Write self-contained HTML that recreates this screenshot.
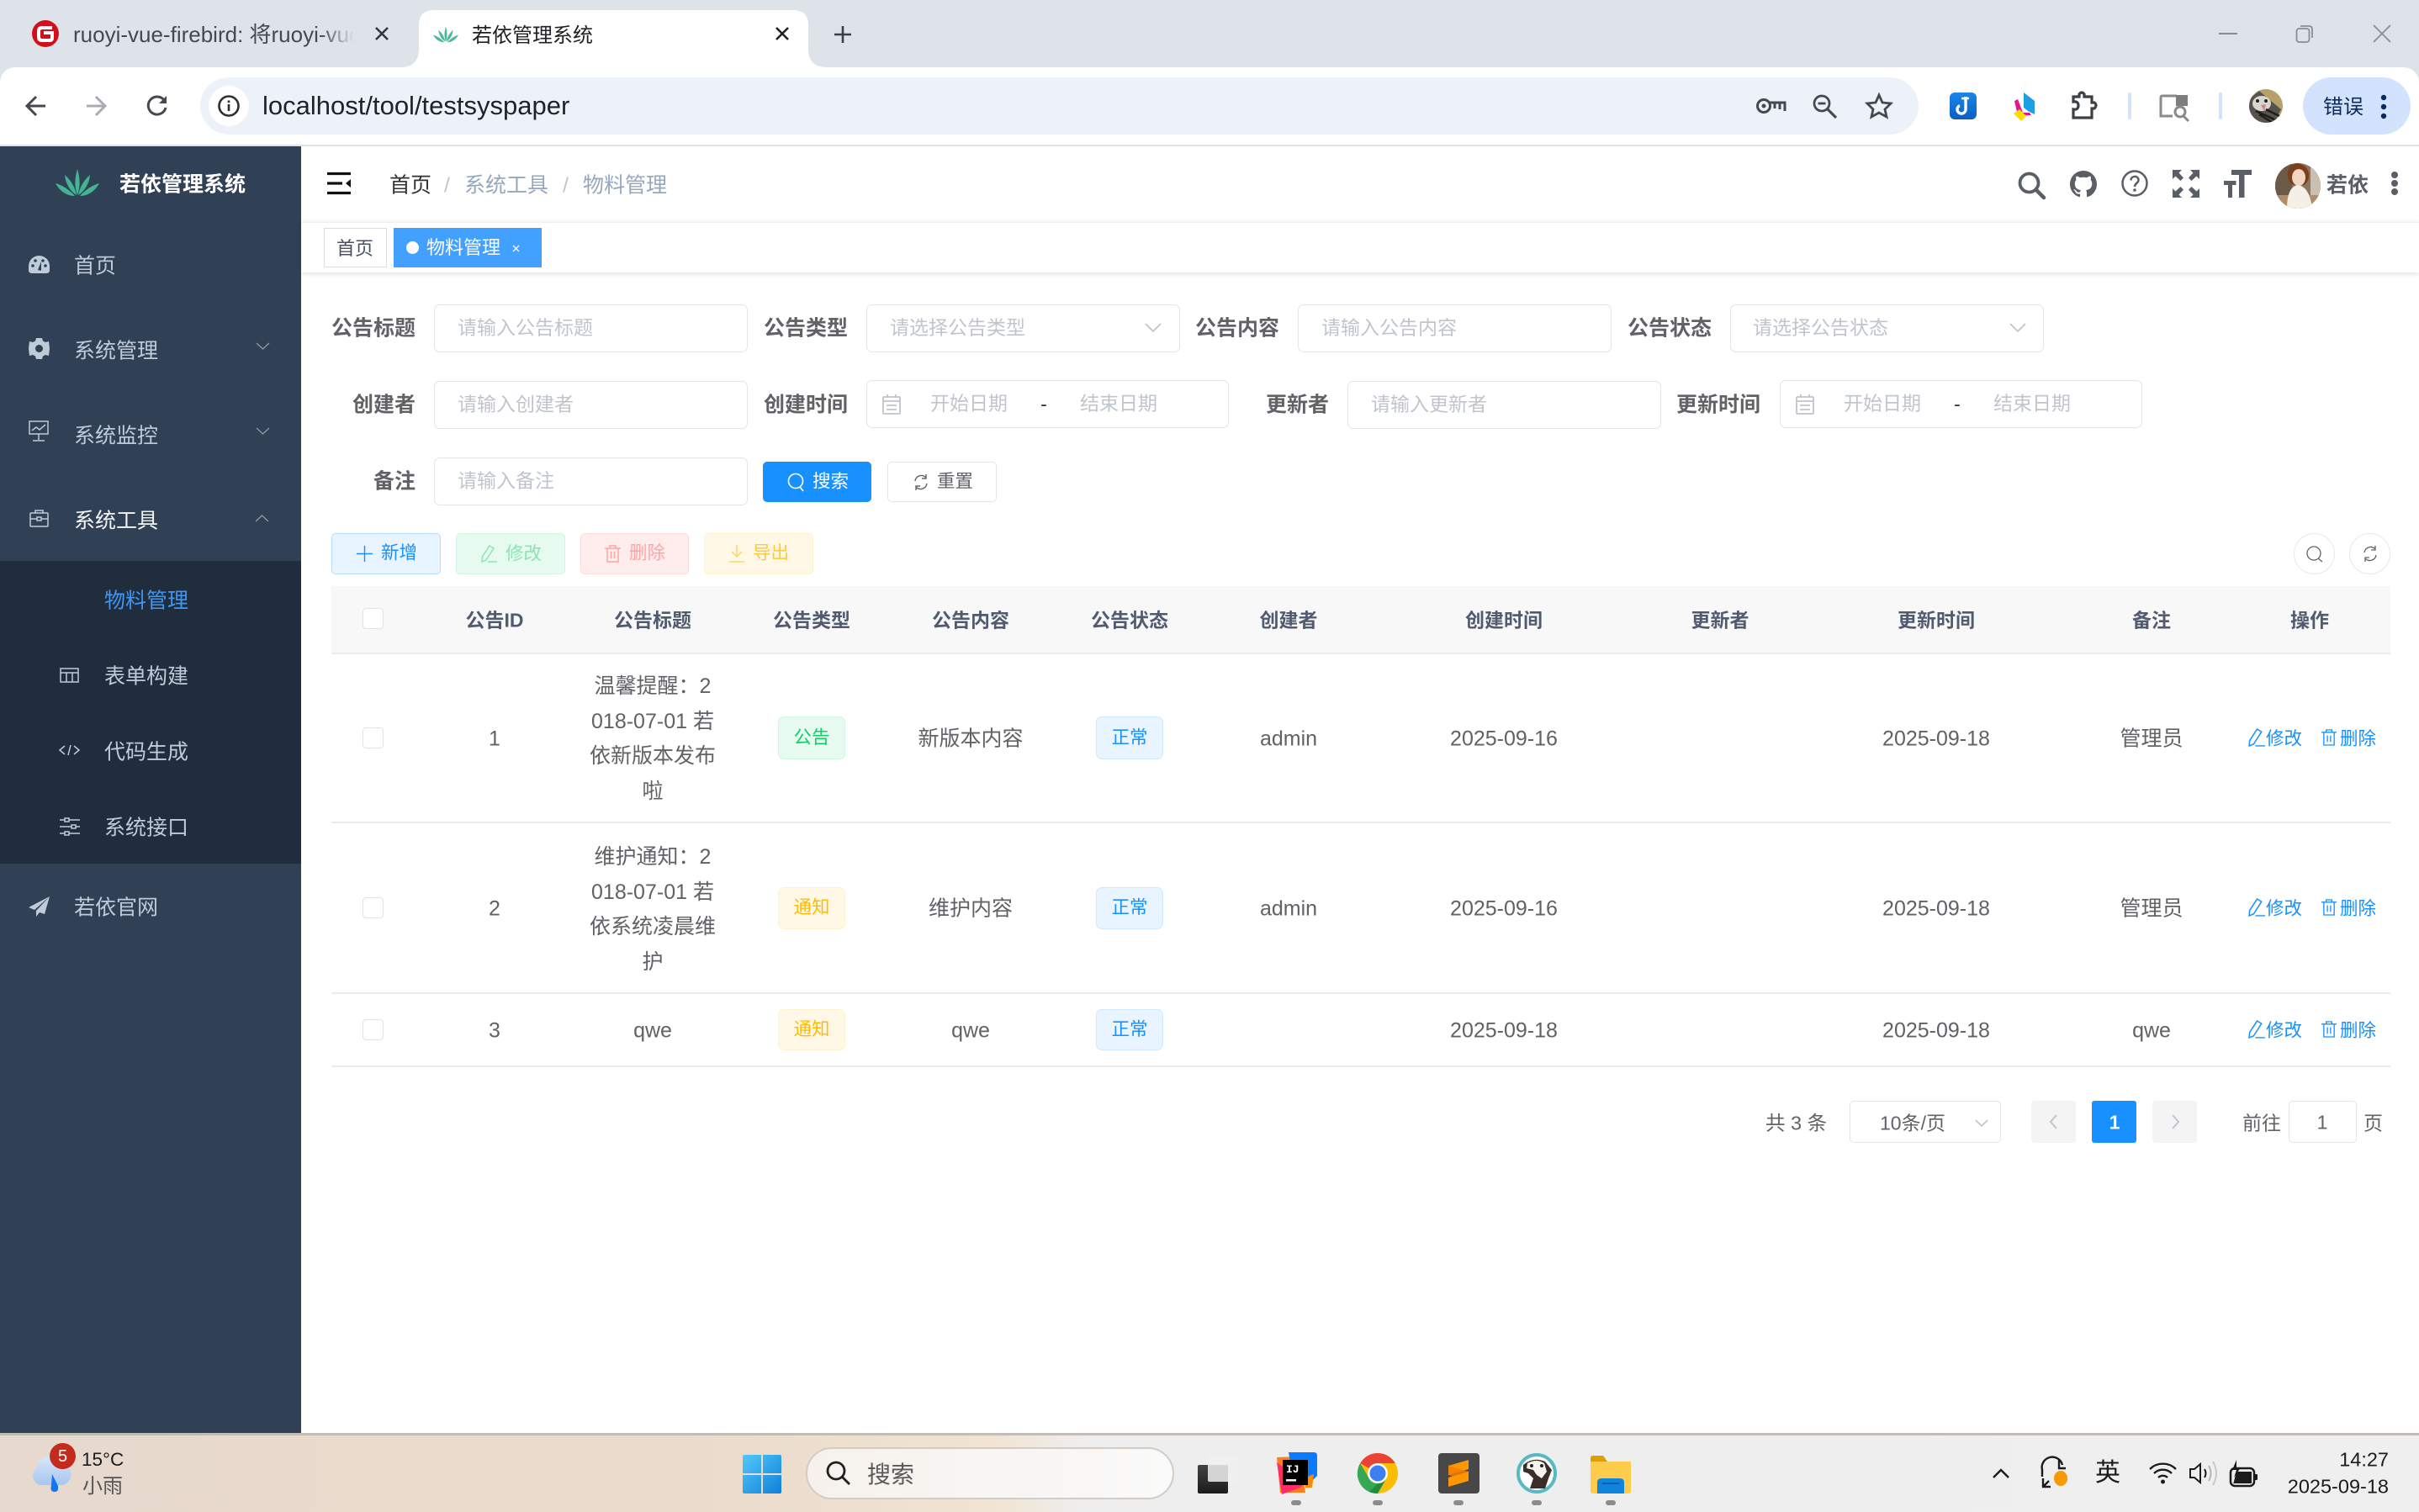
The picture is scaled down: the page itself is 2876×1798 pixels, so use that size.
<!DOCTYPE html>
<html lang="zh"><head><meta charset="utf-8"><title>若依管理系统</title>
<style>
*{box-sizing:border-box}
html,body{margin:0;padding:0;width:2876px;height:1798px;overflow:hidden;background:#fff;font-family:"Liberation Sans","Noto Sans CJK SC",sans-serif;color:#606266}
.a{position:absolute}
.t{position:absolute;white-space:nowrap;line-height:1;transform:translateY(calc(-50% + 2px))}
.c{position:absolute;white-space:nowrap;line-height:1;transform:translate(-50%,calc(-50% + 2px));text-align:center}
.r{position:absolute;white-space:nowrap;line-height:1;transform:translate(-100%,calc(-50% + 2px))}
.t.n{transform:translateY(-50%)}
.c.n{transform:translate(-50%,-50%)}
.r.n{transform:translate(-100%,-50%)}
svg{position:absolute;overflow:visible}
.m{font-size:25px;color:#bfcbd9}
.lb{font-size:25px;font-weight:700;color:#606266}
.ph{font-size:23px;color:#c0c4cc}
.ip{position:absolute;background:#fff;border:1.5px solid #e1e4ea;border-radius:7px;height:57px}
.th{font-size:23px;font-weight:700;color:#515a6e}
.td{font-size:25px;color:#606266}
.ln{position:absolute;left:394px;width:2448px;height:2px;background:#e8ecf1}
.cb{position:absolute;left:431px;width:25px;height:25px;background:#fff;border:1.5px solid #e0e3e9;border-radius:4px}
.tag{position:absolute;width:80px;border-radius:7px;border:1.5px solid;font-size:21.5px;display:flex;align-items:center;justify-content:center;line-height:1}
.g{background:#e7faf0;border-color:#d0f5e0;color:#13ce66}
.y{background:#fff8e6;border-color:#fff1cc;color:#ffba00}
.b{background:#e8f4ff;border-color:#d1e9ff;color:#1890ff}
.btn{position:absolute;top:634px;height:49px;border-radius:5px;border:1.5px solid}
.op{font-size:21.5px;color:#1890ff}
</style></head><body>

<!-- browser chrome -->
<div class="a" style="left:0;top:0;width:2876px;height:174px;background:#dee3ea"></div>
<div class="a" style="left:0;top:80px;width:2876px;height:92px;background:#fff;border-radius:18px 18px 0 0"></div>
<div class="a" style="left:0;top:172px;width:2876px;height:2px;background:#e1e2e4"></div>
<svg style="left:0;top:0" width="1000" height="100"><path d="M476 80Q498 80 498 58V30Q498 12 516 12H943Q961 12 961 30V58Q961 80 983 80Z" fill="#fff"/></svg>

<svg style="left:38px;top:24px" width="32" height="32" viewBox="0 0 32 32"><circle cx="16" cy="16" r="16" fill="#d0111b"/><path d="M24 9H12Q8 9 8 13V20Q8 24 12 24H21Q24 24 24 21V15H14" fill="none" stroke="#fff" stroke-width="4"/></svg>
<div class="t n" style="left:87px;top:41px;width:334px;overflow:hidden;font-size:26px;line-height:34px;color:#45494f;-webkit-mask-image:linear-gradient(90deg,#000 88%,transparent);mask-image:linear-gradient(90deg,#000 88%,transparent)">ruoyi-vue-firebird: 将ruoyi-vue-</div>
<svg style="left:445px;top:31px" width="18" height="18"><path d="M2 2L16 16M16 2L2 16" stroke="#33373c" stroke-width="2.6"/></svg>
<svg style="left:515px;top:28px" width="30" height="26" viewBox="0 0 52 32"><g fill="#4bb89c"><path d="M26 0C29 10 30 20 26 31C22 20 23 10 26 0Z"/><path d="M11 7C18 13 23 21 25 31C17 26 12 17 11 7Z"/><path d="M41 7C34 13 29 21 27 31C35 26 40 17 41 7Z"/><path d="M0 17C8 19 17 25 23 32C13 32 5 26 0 17Z"/><path d="M52 17C44 19 35 25 29 32C39 32 47 26 52 17Z"/></g></svg>
<div class="t" style="left:561px;top:41px;font-size:24px;color:#202124">若依管理系统</div>
<svg style="left:921px;top:31px" width="18" height="18"><path d="M2 2L16 16M16 2L2 16" stroke="#1f2124" stroke-width="2.6"/></svg>
<svg style="left:991px;top:30px" width="22" height="22"><path d="M11 1V21M1 11H21" stroke="#3b3f44" stroke-width="2.6"/></svg>
<svg style="left:2638px;top:39px" width="22" height="3"><rect width="22" height="2" fill="#8a8e94"/></svg>
<svg style="left:2729px;top:29px" width="22" height="22"><rect x="1.5" y="5" width="15" height="16" rx="3" fill="none" stroke="#8a8e94" stroke-width="1.8"/><path d="M6 2H16Q20 2 20 6V16" fill="none" stroke="#8a8e94" stroke-width="1.8"/></svg>
<svg style="left:2821px;top:30px" width="22" height="20"><path d="M1 0L21 20M21 0L1 20" stroke="#8a8e94" stroke-width="1.8"/></svg>

<svg style="left:30px;top:112px" width="26" height="28"><path d="M24 14H3M13 3L2 14L13 25" fill="none" stroke="#45494f" stroke-width="3"/></svg>
<svg style="left:101px;top:112px" width="26" height="28"><path d="M2 14H23M13 3L24 14L13 25" fill="none" stroke="#a9acb1" stroke-width="3"/></svg>
<svg style="left:174px;top:112px" width="26" height="28" viewBox="0 0 26 28"><path d="M21 7A10.5 10.5 0 1 0 23 16" fill="none" stroke="#45494f" stroke-width="3"/><path d="M24 2V11H15Z" fill="#45494f"/></svg>

<div class="a" style="left:238px;top:92px;width:2043px;height:68px;border-radius:34px;background:#edf2fa"></div>
<div class="a" style="left:248px;top:102px;width:48px;height:48px;border-radius:50%;background:#fff"></div>
<svg style="left:259px;top:113px" width="26" height="26"><circle cx="13" cy="13" r="11.5" fill="none" stroke="#2b2e33" stroke-width="2.6"/><rect x="11.7" y="11" width="2.6" height="8" fill="#2b2e33"/><rect x="11.7" y="6.5" width="2.6" height="2.6" fill="#2b2e33"/></svg>
<div class="t n" style="left:312px;top:126px;font-size:31px;color:#1f2226;line-height:38px">localhost/tool/testsyspaper</div>
<svg style="left:2088px;top:115px" width="36" height="22"><circle cx="9" cy="11" r="7.5" fill="none" stroke="#45494f" stroke-width="3"/><circle cx="9" cy="11" r="2.5" fill="#45494f"/><path d="M16 7H34V17M28 8V15M22 8V14" fill="none" stroke="#45494f" stroke-width="3"/></svg>
<svg style="left:2155px;top:112px" width="30" height="29"><circle cx="11" cy="11" r="9" fill="none" stroke="#45494f" stroke-width="2.8"/><path d="M6.5 11H15.5" stroke="#45494f" stroke-width="2.8"/><path d="M17.5 17.5L28 28" stroke="#45494f" stroke-width="3.2"/></svg>
<svg style="left:2218px;top:110px" width="32" height="31" viewBox="0 0 32 31"><path d="M16 3L20 12L30 13L23 20L25 29L16 24L7 29L9 20L2 13L12 12Z" fill="none" stroke="#45494f" stroke-width="2.8"/></svg>

<svg style="left:2318px;top:110px" width="32" height="32" viewBox="0 0 32 32"><defs><linearGradient id="jb" x1="0" y1="0" x2="0" y2="1"><stop offset="0" stop-color="#1a87e8"/><stop offset="1" stop-color="#0a5fc4"/></linearGradient></defs><rect width="32" height="32" rx="6" fill="url(#jb)"/><path d="M19 5V20A5 5 0 1 1 12 15.5" fill="none" stroke="#fff" stroke-width="3.4"/><path d="M14 7H23" stroke="#fff" stroke-width="2.5"/></svg>
<svg style="left:2391px;top:108px" width="30" height="36" viewBox="0 0 30 36"><path d="M15 2L28 12V28L20 24L15 20Z" fill="#1e9fe4"/><path d="M4 12L8 10L14 26H22L24 29H8Z" fill="#e9128f"/><path d="M3 27L10 22L18 30L12 36Z" fill="#ffdc00"/></svg>
<svg style="left:2461px;top:108px" width="34" height="34" viewBox="0 0 34 34"><path d="M4 7H11V4Q14 0 17 4V7H26V14H29Q33 17 29 21H26V32H4V22Q10 23 10 17.5Q10 12 4 13Z" fill="none" stroke="#3c4043" stroke-width="3.2"/></svg>
<div class="a" style="left:2530px;top:110px;width:4px;height:32px;background:#d3e3fd;border-radius:2px"></div>
<svg style="left:2568px;top:112px" width="36" height="32"><path d="M20 2H3Q1 2 1 4V26H15" fill="none" stroke="#8a8a8a" stroke-width="3"/><path d="M19 1H33V14H19Z" fill="#7d7d7d"/><circle cx="24" cy="21" r="6" fill="none" stroke="#8a8a8a" stroke-width="3"/><path d="M28 26L34 32" stroke="#8a8a8a" stroke-width="3"/></svg>
<div class="a" style="left:2638px;top:110px;width:4px;height:32px;background:#d3e3fd;border-radius:2px"></div>
<svg style="left:2674px;top:106px" width="40" height="40" viewBox="0 0 40 40"><defs><clipPath id="ca"><circle cx="20" cy="20" r="20"/></clipPath></defs><g clip-path="url(#ca)"><rect width="40" height="40" fill="#b8a06a"/><path d="M0 12L12 2L26 14L38 24L30 40H4L0 30Z" fill="#55534e"/><ellipse cx="15" cy="17" rx="11" ry="9" fill="#d9d6cf"/><path d="M14 19L20 18L18 26Z" fill="#d9808e"/><path d="M8 26L30 36M12 30L28 40M20 24L36 32" stroke="#1d1d1b" stroke-width="2.5"/><circle cx="10" cy="14" r="2" fill="#222"/><circle cx="20" cy="14" r="2" fill="#222"/></g></svg>
<div class="a" style="left:2738px;top:92px;width:128px;height:68px;border-radius:34px;background:#d3e3fd"></div>
<div class="t" style="left:2762px;top:126px;font-size:24px;color:#0b2a5c">错误</div>
<svg style="left:2829px;top:111px" width="10" height="32"><circle cx="5" cy="5" r="3.2" fill="#0b2a5c"/><circle cx="5" cy="16" r="3.2" fill="#0b2a5c"/><circle cx="5" cy="27" r="3.2" fill="#0b2a5c"/></svg>

<!-- sidebar -->
<div class="a" style="left:0;top:174px;width:358px;height:1530px;background:#304156"></div>
<div class="a" style="left:0;top:667px;width:358px;height:360px;background:#1f2d3d"></div>
<svg style="left:66px;top:201px" width="52" height="32" viewBox="0 0 52 32"><g fill="#45b492"><path d="M26 0C29 10 30 20 26 31C22 20 23 10 26 0Z"/><path d="M11 7C18 13 23 21 25 31C17 26 12 17 11 7Z"/><path d="M41 7C34 13 29 21 27 31C35 26 40 17 41 7Z"/><path d="M0 17C8 19 17 25 23 32C13 32 5 26 0 17Z"/><path d="M52 17C44 19 35 25 29 32C39 32 47 26 52 17Z"/></g></svg>
<div class="t" style="left:142px;top:218px;font-size:25px;font-weight:700;color:#fff">若依管理系统</div>

<div class="t m" style="left:88px;top:315px">首页</div>
<div class="t m" style="left:88px;top:416px">系统管理</div>
<div class="t m" style="left:88px;top:517px">系统监控</div>
<div class="t m" style="left:88px;top:618px;color:#f4f4f5">系统工具</div>
<div class="t m" style="left:124px;top:713px;color:#3f96f5">物料管理</div>
<div class="t m" style="left:124px;top:803px">表单构建</div>
<div class="t m" style="left:124px;top:893px">代码生成</div>
<div class="t m" style="left:124px;top:983px">系统接口</div>
<div class="t m" style="left:88px;top:1078px">若依官网</div>

<svg style="left:34px;top:304px" width="25" height="22" viewBox="0 0 25 22"><path d="M12.5 0A12.5 12.5 0 0 1 25 12.5V17Q25 21 21 21H4Q0 21 0 17V12.5A12.5 12.5 0 0 1 12.5 0Z" fill="#bfcbd9"/><circle cx="5" cy="12" r="1.8" fill="#304156"/><circle cx="8" cy="6" r="1.8" fill="#304156"/><circle cx="20" cy="12" r="1.8" fill="#304156"/><circle cx="17" cy="6" r="1.8" fill="#304156"/><path d="M11 17L15 7L15 18Z" fill="#304156"/></svg>
<svg style="left:34px;top:402px" width="25" height="25" viewBox="0 0 25 25"><path d="M9 0H16L17 3.500L20 5L24 4L25 12.500L24 21L20 20L17 21.500L16 25H9L8 21.500L5 20L1 21L0 12.500L1 4L5 5L8 3.500Z" fill="#bfcbd9"/><circle cx="12.500" cy="12.500" r="4.500" fill="#304156"/></svg>
<svg style="left:34px;top:500px" width="24" height="25" viewBox="0 0 24 25" fill="none" stroke="#bfcbd9" stroke-width="1.5"><rect x="1" y="1" width="22" height="15"/><path d="M12 16V23M5 24H19M4 12L9 8L13 11L20 5"/></svg>
<svg style="left:35px;top:605px" width="23" height="22" viewBox="0 0 23 22" fill="none" stroke="#bfcbd9" stroke-width="1.5"><rect x="1" y="5" width="21" height="16" rx="1"/><path d="M7 5V2H16V5M1 12H9M14 12H22"/><rect x="9" y="10" width="5" height="4"/></svg>
<svg style="left:71px;top:794px" width="23" height="18" viewBox="0 0 23 18" fill="none" stroke="#bfcbd9" stroke-width="1.5"><rect x="1" y="1" width="21" height="16"/><path d="M1 6H22M8 6V17M15 6V17"/></svg>
<svg style="left:70px;top:885px" width="25" height="14" viewBox="0 0 25 14" fill="none" stroke="#bfcbd9" stroke-width="1.5"><path d="M7 2L1 7L7 12M18 2L24 7L18 12M14 1L11 13"/></svg>
<svg style="left:71px;top:971px" width="24" height="24" viewBox="0 0 24 24" fill="none" stroke="#bfcbd9" stroke-width="1.5"><path d="M0 4H6M11 4H24M0 12H14M19 12H24M0 20H6M11 20H24"/><rect x="6" y="2" width="5" height="4"/><rect x="14" y="10" width="5" height="4"/><rect x="6" y="18" width="5" height="4"/></svg>
<svg style="left:34px;top:1066px" width="25" height="24" viewBox="0 0 25 24"><path d="M25 0L0 13L7 16L25 0ZM25 0L9 17V24L13 19L19 21Z" fill="#bfcbd9"/></svg>
<svg style="left:304px;top:407px" width="17" height="10"><path d="M1 1L8.5 8L16 1" fill="none" stroke="#909aa8" stroke-width="1.3"/></svg>
<svg style="left:304px;top:508px" width="17" height="10"><path d="M1 1L8.5 8L16 1" fill="none" stroke="#909aa8" stroke-width="1.3"/></svg>
<svg style="left:303px;top:611px" width="17" height="10"><path d="M1 9L8.5 2L16 9" fill="none" stroke="#909aa8" stroke-width="1.3"/></svg>

<!-- navbar -->
<div class="a" style="left:358px;top:174px;width:2518px;height:90px;background:#fff"></div>
<div class="a" style="left:358px;top:264px;width:2518px;height:60px;background:#fff;border-top:1px solid #eef0f2;box-shadow:0 2px 5px rgba(0,21,41,.12),0 -2px 5px rgba(0,21,41,.03)"></div>
<svg style="left:389px;top:205px" width="28" height="26" viewBox="0 0 28 26"><path d="M0 1.5H28M0 13H18M0 24.5H28" stroke="#111" stroke-width="3.2"/><path d="M28 8L22 13L28 18Z" fill="#111"/></svg>
<div class="t" style="left:463px;top:219px;font-size:25px;color:#303133">首页</div>
<div class="t" style="left:528px;top:219px;font-size:25px;color:#c0c4cc">/</div>
<div class="t" style="left:552px;top:219px;font-size:25px;color:#97a8be">系统工具</div>
<div class="t" style="left:669px;top:219px;font-size:25px;color:#c0c4cc">/</div>
<div class="t" style="left:693px;top:219px;font-size:25px;color:#97a8be">物料管理</div>

<svg style="left:2399px;top:204px" width="33" height="33" viewBox="0 0 33 33"><circle cx="13.5" cy="13.5" r="11" fill="none" stroke="#5a5e66" stroke-width="3.8"/><path d="M21.5 21.5L31 31" stroke="#5a5e66" stroke-width="4.5" stroke-linecap="round"/></svg>
<svg style="left:2461px;top:203px" width="32" height="32" viewBox="0 0 16 16"><path fill="#5a5e66" d="M8 0C3.580 0 0 3.580 0 8c0 3.540 2.290 6.530 5.470 7.590.4.070.55-.17.55-.38 0-.19-.01-.82-.01-1.490-2.010.37-2.530-.49-2.690-.94-.09-.23-.48-.94-.82-1.130-.28-.15-.68-.52-.01-.53.63-.01 1.080.58 1.230.82.720 1.210 1.870.87 2.330.66.070-.52.280-.87.510-1.070-1.780-.2-3.640-.89-3.640-3.950 0-.87.310-1.590.820-2.150-.08-.2-.36-1.020.08-2.120 0 0 .67-.21 2.200.82.640-.18 1.320-.27 2-.27s1.360.09 2 .27c1.530-1.040 2.200-.82 2.200-.82.440 1.100.16 1.920.08 2.120.51.560.82 1.270.82 2.150 0 3.070-1.870 3.750-3.650 3.950.29.250.54.730.54 1.480 0 1.070-.01 1.930-.01 2.200 0 .21.150.46.550.38A8.013 8.013 0 0 0 16 8c0-4.420-3.580-8-8-8z"/></svg>
<svg style="left:2522px;top:202px" width="32" height="32" viewBox="0 0 32 32"><circle cx="16" cy="16" r="14.5" fill="none" stroke="#5a5e66" stroke-width="2.5"/><path d="M11.5 12.5C11.5 6.5 20.5 6.5 20.5 12C20.500 16 16 15.500 16 20" fill="none" stroke="#5a5e66" stroke-width="2.5"/><circle cx="16" cy="24" r="1.8" fill="#5a5e66"/></svg>
<svg style="left:2583px;top:202px" width="32" height="33" viewBox="0 0 32 33" fill="#5a5e66"><path d="M0 0H11L7.500 3.500L13 9.500L9.500 13L3.500 7.500L0 11ZM32 0V11L28.500 7.500L22.500 13L19 9.500L24.500 3.500L21 0ZM0 33V22L3.500 25.500L9.500 20L13 23.500L7.500 29.500L11 33ZM32 33H21L24.500 29.500L19 23.500L22.500 20L28.500 25.500L32 22Z"/></svg>
<svg style="left:2644px;top:202px" width="33" height="33" viewBox="0 0 33 33" fill="#5a5e66"><path d="M9 0H33V6H24.500V33H18V6H9Z"/><path d="M0 13H14.500V18H10V33H5V18H0Z"/></svg>
<svg style="left:2705px;top:194px" width="54" height="54" viewBox="0 0 54 54"><defs><clipPath id="cb"><circle cx="27" cy="27" r="27"/></clipPath></defs><g clip-path="url(#cb)"><rect width="54" height="54" fill="#8c7561"/><rect x="0" y="0" width="20" height="54" fill="#6b5a48"/><rect x="42" y="0" width="12" height="54" fill="#c9c0b2"/><rect x="0" y="38" width="54" height="16" fill="#b08e6c"/><path d="M26 0Q14 2 15 14Q16 24 22 26H34Q41 22 40 12Q38 2 26 0Z" fill="#7a3f1c"/><ellipse cx="28" cy="17" rx="8" ry="10" fill="#f3d6c2"/><path d="M14 54Q14 28 27 26Q41 28 44 54Z" fill="#f4efe7"/></g></svg>
<div class="t" style="left:2766px;top:219px;font-size:25px;font-weight:700;color:#5a5e66">若依</div>
<svg style="left:2841px;top:203px" width="12" height="30"><circle cx="6" cy="5" r="4" fill="#5a5e66"/><circle cx="6" cy="15" r="4" fill="#5a5e66"/><circle cx="6" cy="25" r="4" fill="#5a5e66"/></svg>

<!-- tags -->
<div class="a" style="left:385px;top:271px;width:75px;height:47px;background:#fff;border:1.5px solid #d8dce5"></div>
<div class="c" style="left:422px;top:294px;font-size:22px;color:#495060">首页</div>
<div class="a" style="left:468px;top:271px;width:176px;height:47px;background:#42a0ff"></div>
<div class="a" style="left:483px;top:287px;width:15px;height:15px;border-radius:50%;background:#fff"></div>
<div class="t" style="left:507px;top:293px;font-size:22px;color:#fff">物料管理</div>
<svg style="left:609px;top:291px" width="9" height="9"><path d="M1 1L8 8M8 1L1 8" stroke="#e8f3ff" stroke-width="1.4"/></svg>

<!-- form row 1 -->
<div class="r lb" style="left:494px;top:389px">公告标题</div>
<div class="ip" style="left:516px;top:362px;width:373px"></div><div class="t n ph" style="left:544px;top:390px">请输入公告标题</div>
<div class="r lb" style="left:1008px;top:389px">公告类型</div>
<div class="ip" style="left:1030px;top:362px;width:373px"></div><div class="t n ph" style="left:1058px;top:390px">请选择公告类型</div>
<svg style="left:1361px;top:384px" width="20" height="12"><path d="M1 1L10 10L19 1" fill="none" stroke="#c0c4cc" stroke-width="1.8"/></svg>
<div class="r lb" style="left:1521px;top:389px">公告内容</div>
<div class="ip" style="left:1543px;top:362px;width:373px"></div><div class="t n ph" style="left:1571px;top:390px">请输入公告内容</div>
<div class="r lb" style="left:2035px;top:389px">公告状态</div>
<div class="ip" style="left:2057px;top:362px;width:373px"></div><div class="t n ph" style="left:2084px;top:390px">请选择公告状态</div>
<svg style="left:2389px;top:384px" width="20" height="12"><path d="M1 1L10 10L19 1" fill="none" stroke="#c0c4cc" stroke-width="1.8"/></svg>

<!-- form row 2 -->
<div class="r lb" style="left:494px;top:480px">创建者</div>
<div class="ip" style="left:516px;top:453px;width:373px"></div><div class="t n ph" style="left:544px;top:481px">请输入创建者</div>
<div class="r lb" style="left:1008px;top:480px">创建时间</div>
<div class="ip" style="left:1030px;top:452px;width:431px"></div>
<svg style="left:1049px;top:469px" width="22" height="24" viewBox="0 0 22 24" fill="none" stroke="#c0c4cc" stroke-width="1.8"><rect x="1" y="3" width="20" height="20" rx="1"/><path d="M1 8H21M6 0V4M16 0V4M5 13H17M5 18H17" /></svg>
<div class="t n ph" style="left:1106px;top:480px">开始日期</div>
<div class="c n" style="left:1241px;top:481px;font-size:23px;color:#303133">-</div>
<div class="t n ph" style="left:1284px;top:480px">结束日期</div>
<div class="r lb" style="left:1580px;top:480px">更新者</div>
<div class="ip" style="left:1602px;top:453px;width:373px"></div><div class="t n ph" style="left:1630px;top:481px">请输入更新者</div>
<div class="r lb" style="left:2093px;top:480px">更新时间</div>
<div class="ip" style="left:2116px;top:452px;width:431px"></div>
<svg style="left:2135px;top:469px" width="22" height="24" viewBox="0 0 22 24" fill="none" stroke="#c0c4cc" stroke-width="1.8"><rect x="1" y="3" width="20" height="20" rx="1"/><path d="M1 8H21M6 0V4M16 0V4M5 13H17M5 18H17" /></svg>
<div class="t n ph" style="left:2192px;top:480px">开始日期</div>
<div class="c n" style="left:2327px;top:481px;font-size:23px;color:#303133">-</div>
<div class="t n ph" style="left:2370px;top:480px">结束日期</div>

<!-- form row 3 -->
<div class="r lb" style="left:494px;top:571px">备注</div>
<div class="ip" style="left:516px;top:544px;width:373px"></div><div class="t n ph" style="left:544px;top:572px">请输入备注</div>
<div class="a" style="left:907px;top:549px;width:129px;height:48px;border-radius:5px;background:#1890ff"></div>
<svg style="left:936px;top:562px" width="21" height="23" viewBox="0 0 21 23" fill="none" stroke="#fff" stroke-width="1.6"><circle cx="10" cy="10" r="8.500"/><path d="M15 17L19 22"/></svg>
<div class="t n" style="left:966px;top:573px;font-size:21.5px;color:#fff">搜索</div>
<div class="a" style="left:1055px;top:549px;width:130px;height:48px;border-radius:5px;background:#fff;border:1.5px solid #e1e4ea"></div>
<svg style="left:1086px;top:564px" width="18" height="19" viewBox="0 0 18 19" fill="none" stroke="#606266" stroke-width="1.4"><path d="M2 8A7.500 7.500 0 0 1 15 4M16 11A7.500 7.500 0 0 1 3 15M15 0V5H10M3 19V14H8"/></svg>
<div class="t n" style="left:1114px;top:573px;font-size:21.5px;color:#606266">重置</div>

<!-- toolbar -->
<div class="btn" style="left:394px;width:130px;background:#e8f4ff;border-color:#b5dcff"></div>
<svg style="left:424px;top:649px" width="19" height="19"><path d="M9.500 0V19M0 9.500H19" stroke="#1890ff" stroke-width="1.4"/></svg>
<div class="t n" style="left:453px;top:658px;font-size:21.5px;color:#1890ff">新增</div>
<div class="btn" style="left:542px;width:130px;background:#e7faf0;border-color:#d0f5e0"></div>
<svg style="left:572px;top:648px" width="19" height="21" viewBox="0 0 19 21" fill="none" stroke="#89e6b3" stroke-width="1.5"><path d="M10 1L15 4L6 18L1 20L1.500 14ZM8 20H19"/></svg>
<div class="t n" style="left:601px;top:659px;font-size:21.5px;color:#89e6b3">修改</div>
<div class="btn" style="left:690px;width:129px;background:#ffeded;border-color:#ffdbdb"></div>
<svg style="left:719px;top:648px" width="19" height="21" viewBox="0 0 19 21" fill="none" stroke="#ffa4a4" stroke-width="1.5"><path d="M0 4H19M6 4V1H13V4M3 4V20H16V4M7.500 8V16M11.500 8V16"/></svg>
<div class="t n" style="left:748px;top:658px;font-size:21.5px;color:#ffa4a4">删除</div>
<div class="btn" style="left:837px;width:130px;background:#fff8e6;border-color:#fff1cc"></div>
<svg style="left:867px;top:648px" width="18" height="21" viewBox="0 0 18 21" fill="none" stroke="#ffd666" stroke-width="1.5"><path d="M9 0V14M3 8L9 14L15 8M0 20H18"/></svg>
<div class="t n" style="left:895px;top:658px;font-size:21.5px;color:#ffc93d">导出</div>

<div class="a" style="left:2727px;top:634px;width:49px;height:49px;border-radius:50%;background:#fff;border:1.5px solid #e6e8ec"></div>
<svg style="left:2742px;top:649px" width="20" height="20" viewBox="0 0 20 20" fill="none" stroke="#606266" stroke-width="1.3"><circle cx="9" cy="9" r="8"/><path d="M14 15L19 19"/></svg>
<div class="a" style="left:2793px;top:634px;width:49px;height:49px;border-radius:50%;background:#fff;border:1.5px solid #e6e8ec"></div>
<svg style="left:2809px;top:649px" width="18" height="19" viewBox="0 0 18 19" fill="none" stroke="#606266" stroke-width="1.3"><path d="M2 8A7.500 7.500 0 0 1 15 4M16 11A7.500 7.500 0 0 1 3 15M15 0V5H10M3 19V14H8"/></svg>

<!-- table -->
<div class="a" style="left:394px;top:697px;width:2448px;height:79px;background:#f8f8f9"></div>
<div class="ln" style="top:776px"></div><div class="ln" style="top:977px"></div><div class="ln" style="top:1180px"></div><div class="ln" style="top:1267px"></div>
<div class="cb" style="top:723px"></div>
<div class="c th" style="left:588px;top:736px">公告ID</div>
<div class="c th" style="left:776px;top:736px">公告标题</div>
<div class="c th" style="left:965px;top:736px">公告类型</div>
<div class="c th" style="left:1154px;top:736px">公告内容</div>
<div class="c th" style="left:1343px;top:736px">公告状态</div>
<div class="c th" style="left:1532px;top:736px">创建者</div>
<div class="c th" style="left:1788px;top:736px">创建时间</div>
<div class="c th" style="left:2045px;top:736px">更新者</div>
<div class="c th" style="left:2302px;top:736px">更新时间</div>
<div class="c th" style="left:2558px;top:736px">备注</div>
<div class="c th" style="left:2746px;top:736px">操作</div>

<!-- row 1 -->
<div class="cb" style="top:865px"></div>
<div class="c td" style="left:588px;top:877px">1</div>
<div class="c td" style="left:776px;top:877px;line-height:41.5px">温馨提醒：2<br>018-07-01 若<br>依新版本发布<br>啦</div>
<div class="tag g" style="left:925px;top:852px;height:51px">公告</div>
<div class="c td" style="left:1154px;top:877px">新版本内容</div>
<div class="tag b" style="left:1303px;top:852px;height:51px">正常</div>
<div class="c td" style="left:1532px;top:877px">admin</div>
<div class="c td" style="left:1788px;top:877px">2025-09-16</div>
<div class="c td" style="left:2302px;top:877px">2025-09-18</div>
<div class="c td" style="left:2558px;top:877px">管理员</div>
<!-- row 2 -->
<div class="cb" style="top:1067px"></div>
<div class="c td" style="left:588px;top:1079px">2</div>
<div class="c td" style="left:776px;top:1080px;line-height:41.5px">维护通知：2<br>018-07-01 若<br>依系统凌晨维<br>护</div>
<div class="tag y" style="left:925px;top:1055px;height:50px">通知</div>
<div class="c td" style="left:1154px;top:1079px">维护内容</div>
<div class="tag b" style="left:1303px;top:1055px;height:50px">正常</div>
<div class="c td" style="left:1532px;top:1079px">admin</div>
<div class="c td" style="left:1788px;top:1079px">2025-09-16</div>
<div class="c td" style="left:2302px;top:1079px">2025-09-18</div>
<div class="c td" style="left:2558px;top:1079px">管理员</div>
<!-- row 3 -->
<div class="cb" style="top:1212px"></div>
<div class="c td" style="left:588px;top:1224px">3</div>
<div class="c td" style="left:776px;top:1224px">qwe</div>
<div class="tag y" style="left:925px;top:1200px;height:49px">通知</div>
<div class="c td" style="left:1154px;top:1224px">qwe</div>
<div class="tag b" style="left:1303px;top:1200px;height:49px">正常</div>
<div class="c td" style="left:1788px;top:1224px">2025-09-18</div>
<div class="c td" style="left:2302px;top:1224px">2025-09-18</div>
<div class="c td" style="left:2558px;top:1224px">qwe</div>

<!-- ops -->
<svg style="left:2673px;top:866px" width="20" height="22" viewBox="0 0 19 21" fill="none" stroke="#1890ff" stroke-width="1.4"><path d="M10 1L15 4L6 18L1 20L1.500 14ZM8 20H19"/></svg>
<div class="t op" style="left:2694px;top:877px">修改</div>
<svg style="left:2760px;top:866px" width="18" height="22" viewBox="0 0 19 21" fill="none" stroke="#1890ff" stroke-width="1.4"><path d="M0 4H19M6 4V1H13V4M3 4V20H16V4M7.500 8V16M11.500 8V16"/></svg>
<div class="t op" style="left:2782px;top:877px">删除</div>
<svg style="left:2673px;top:1068px" width="20" height="22" viewBox="0 0 19 21" fill="none" stroke="#1890ff" stroke-width="1.4"><path d="M10 1L15 4L6 18L1 20L1.500 14ZM8 20H19"/></svg>
<div class="t op" style="left:2694px;top:1079px">修改</div>
<svg style="left:2760px;top:1068px" width="18" height="22" viewBox="0 0 19 21" fill="none" stroke="#1890ff" stroke-width="1.4"><path d="M0 4H19M6 4V1H13V4M3 4V20H16V4M7.500 8V16M11.500 8V16"/></svg>
<div class="t op" style="left:2782px;top:1079px">删除</div>
<svg style="left:2673px;top:1213px" width="20" height="22" viewBox="0 0 19 21" fill="none" stroke="#1890ff" stroke-width="1.4"><path d="M10 1L15 4L6 18L1 20L1.500 14ZM8 20H19"/></svg>
<div class="t op" style="left:2694px;top:1224px">修改</div>
<svg style="left:2760px;top:1213px" width="18" height="22" viewBox="0 0 19 21" fill="none" stroke="#1890ff" stroke-width="1.4"><path d="M0 4H19M6 4V1H13V4M3 4V20H16V4M7.500 8V16M11.500 8V16"/></svg>
<div class="t op" style="left:2782px;top:1224px">删除</div>

<!-- pagination -->
<div class="t" style="left:2099px;top:1334px;font-size:23.500px;color:#606266">共 3 条</div>
<div class="a" style="left:2199px;top:1309px;width:180px;height:50px;border-radius:5px;background:#fff;border:1.5px solid #e1e4ea"></div>
<div class="t" style="left:2235px;top:1334px;font-size:23px;color:#606266">10条/页</div>
<svg style="left:2348px;top:1331px" width="16" height="10"><path d="M1 1L8 8L15 1" fill="none" stroke="#c0c4cc" stroke-width="1.6"/></svg>
<div class="a" style="left:2415px;top:1309px;width:53px;height:50px;border-radius:3px;background:#f4f4f5"></div>
<svg style="left:2436px;top:1325px" width="11" height="18"><path d="M9 1L2 9L9 17" fill="none" stroke="#c0c4cc" stroke-width="2"/></svg>
<div class="a" style="left:2487px;top:1309px;width:53px;height:50px;border-radius:3px;background:#1890ff"></div>
<div class="c" style="left:2514px;top:1333px;font-size:23px;font-weight:700;color:#fff">1</div>
<div class="a" style="left:2559px;top:1309px;width:53px;height:50px;border-radius:3px;background:#f4f4f5"></div>
<svg style="left:2581px;top:1325px" width="11" height="18"><path d="M2 1L9 9L2 17" fill="none" stroke="#c0c4cc" stroke-width="2"/></svg>
<div class="t" style="left:2666px;top:1334px;font-size:23px;color:#606266">前往</div>
<div class="a" style="left:2721px;top:1309px;width:81px;height:50px;border-radius:5px;background:#fff;border:1.5px solid #e1e4ea"></div>
<div class="c" style="left:2761px;top:1333px;font-size:23px;color:#606266">1</div>
<div class="t" style="left:2810px;top:1334px;font-size:23px;color:#606266">页</div>

<!-- taskbar -->
<div class="a" style="left:0;top:1704px;width:2876px;height:94px;background:linear-gradient(90deg,#e8d9ce 0,#eadacb 800px,#f1e4d2 1180px,#eeeeee 1290px,#efefef 100%);border-top:3px solid #c1bcb6"></div>
<svg style="left:33px;top:1733px" width="50" height="42" viewBox="0 0 50 42"><defs><linearGradient id="cl" x1="0" y1="0" x2="0" y2="1"><stop offset="0" stop-color="#d8e6f9"/><stop offset="1" stop-color="#a7c6f2"/></linearGradient></defs><path d="M14 33A12 12 0 0 1 11 12A14 14 0 0 1 38 8A12 12 0 0 1 40 33Z" fill="url(#cl)"/><path d="M29 20L36 34Q37 41 32 41Q26 41 28 33Z" fill="#1475f0"/></svg>
<div class="a" style="left:59px;top:1716px;width:31px;height:31px;border-radius:50%;background:#c42b1c"></div>
<div class="c n" style="left:74.5px;top:1732px;font-size:20px;color:#fff">5</div>
<div class="t n" style="left:97px;top:1736px;font-size:22.5px;color:#1b1b1b">15°C</div>
<div class="t n" style="left:98px;top:1768px;font-size:24px;color:#555">小雨</div>

<svg style="left:883px;top:1730px" width="46" height="46" viewBox="0 0 46 46"><defs><linearGradient id="w1" x1="0" y1="0" x2="1" y2="1"><stop offset="0" stop-color="#52c9fb"/><stop offset="1" stop-color="#0f7fd8"/></linearGradient></defs><path d="M0 2Q0 0 2 0H22V22H0ZM24 0H44Q46 0 46 2V22H24ZM0 24H22V46H2Q0 46 0 44ZM24 24H46V44Q46 46 44 46H24Z" fill="url(#w1)"/></svg>
<div class="a" style="left:958px;top:1721px;width:438px;height:62px;border-radius:31px;background:linear-gradient(90deg,#f6f1ec,#fafafa);border:2px solid #d4ccc4"></div>
<svg style="left:982px;top:1737px" width="30" height="30" viewBox="0 0 30 30" fill="none" stroke="#1f1f1f" stroke-width="2.8"><circle cx="12" cy="12" r="10"/><path d="M19 19L28 28"/></svg>
<div class="t" style="left:1031px;top:1752px;font-size:28px;color:#5a5a5a">搜索</div>

<svg style="left:1424px;top:1728px" width="50" height="48" viewBox="0 0 50 48"><defs><linearGradient id="tv1" x1="0" y1="0" x2="0" y2="1"><stop offset="0" stop-color="#444"/><stop offset="1" stop-color="#1b1b1b"/></linearGradient></defs><rect x="0" y="14" width="36" height="34" rx="2" fill="url(#tv1)"/><rect x="12" y="2" width="35" height="32" rx="2" fill="#f0f0f0" opacity=".85"/></svg>

<svg style="left:1516px;top:1727px" width="50" height="50" viewBox="0 0 50 50"><path d="M2 6L30 5L36 48H6Z" fill="#ff7f1f"/><path d="M16 0H46Q50 0 50 4V28L38 40L22 34Z" fill="#0a7bff"/><path d="M2 12L36 36L30 42L8 50Z" fill="#fc2d6a"/><path d="M36 30L46 26L44 42H36Z" fill="#ff8a00"/><rect x="9" y="9" width="30" height="30" fill="#000"/><text x="13" y="24" font-family="Liberation Mono" font-size="13" font-weight="700" fill="#fff">IJ</text><rect x="13" y="32" width="12" height="2.5" fill="#fff"/></svg>

<svg style="left:1614px;top:1728px" width="48" height="48" viewBox="0 0 48 48"><circle cx="24" cy="24" r="24" fill="#fbbc04"/><path d="M24 0A24 24 0 0 1 44.800 12H24A12 12 0 0 0 13.600 18L3.200 12A24 24 0 0 1 24 0Z" fill="#ea4335"/><path d="M3.200 12L13.600 30A12 12 0 0 0 24 36L13.600 46A24 24 0 0 1 3.200 12Z" fill="#34a853"/><path d="M13.600 46L24 36A12 12 0 0 0 34.400 30L24 48A24 24 0 0 1 13.600 46Z" fill="#1e8e3e"/><circle cx="24" cy="24" r="12" fill="#fff"/><circle cx="24" cy="24" r="9.5" fill="#3b7ff0"/></svg>

<svg style="left:1710px;top:1728px" width="49" height="48" viewBox="0 0 49 48"><rect width="49" height="48" rx="4" fill="#484848"/><path d="M36 8V19L12 26V15Z" fill="#ff9800"/><path d="M12 26L36 33V22L12 15Z" fill="#f57c00" opacity=".85"/><path d="M36 22V33L12 40V29Z" fill="#ff9800"/></svg>

<svg style="left:1803px;top:1728px" width="48" height="48" viewBox="0 0 48 48"><circle cx="24" cy="24" r="22" fill="#fff" stroke="#58b9c3" stroke-width="4"/><path d="M8 14Q20 4 34 10L42 20L38 30L34 42H16L20 30L14 24L8 22Z" fill="#3a2e28"/><path d="M13 12Q24 6 33 12L36 22L30 30L24 26L20 20L12 18Z" fill="#f6f2ec"/><circle cx="18" cy="15" r="2" fill="#222"/><circle cx="30" cy="15" r="2" fill="#222"/></svg>

<svg style="left:1891px;top:1730px" width="48" height="46" viewBox="0 0 48 46"><path d="M0 4Q0 1 3 1H15L20 8H48V13H0Z" fill="#dea000"/><path d="M0 8H48V43Q48 46 45 46H3Q0 46 0 43Z" fill="#fccc4a"/><path d="M8 46V33Q8 28 13 28H35Q40 28 40 33V46Z" fill="#0f84dc"/><rect x="14" y="33" width="20" height="2" fill="#0d5ea8"/></svg>

<div class="a" style="left:1535px;top:1784px;width:12px;height:6px;border-radius:3px;background:#8c8c8c"></div>
<div class="a" style="left:1632px;top:1784px;width:12px;height:6px;border-radius:3px;background:#8c8c8c"></div>
<div class="a" style="left:1728px;top:1784px;width:12px;height:6px;border-radius:3px;background:#8c8c8c"></div>
<div class="a" style="left:1821px;top:1784px;width:12px;height:6px;border-radius:3px;background:#8c8c8c"></div>
<div class="a" style="left:1909px;top:1784px;width:12px;height:6px;border-radius:3px;background:#8c8c8c"></div>

<svg style="left:2369px;top:1746px" width="20" height="12"><path d="M1 11L10 2L19 11" fill="none" stroke="#1b1b1b" stroke-width="2.4"/></svg>
<svg style="left:2426px;top:1734px" width="34" height="36" viewBox="0 0 34 36"><path d="M2 22V14A12 12 0 0 1 26 8M22 2V12H30" fill="none" stroke="#1b1b1b" stroke-width="2.4"/><path d="M3 24V34H12M3 34L10 27" fill="none" stroke="#1b1b1b" stroke-width="2.4"/><ellipse cx="24" cy="24" rx="8" ry="9" fill="#f59a00"/></svg>
<div class="c n" style="left:2506px;top:1752px;font-size:30px;color:#1b1b1b">英</div>
<svg style="left:2555px;top:1738px" width="33" height="28" viewBox="0 0 33 28" fill="none" stroke="#1b1b1b" stroke-width="2.3"><path d="M1 9A22 22 0 0 1 32 9M6 14A15 15 0 0 1 27 14M11 19A8 8 0 0 1 22 19"/><circle cx="16.500" cy="24" r="2.500" fill="#1b1b1b" stroke="none"/></svg>
<svg style="left:2603px;top:1736px" width="32" height="32" viewBox="0 0 32 32" fill="none" stroke="#1b1b1b" stroke-width="2"><path d="M1 11H6L13 5V27L6 21H1Z"/><path d="M18 11Q21 16 18 21"/><path d="M23 7Q28 16 23 25" stroke="#b5b5b5"/><path d="M28 2Q36 16 28 30" stroke="#c9c9c9"/></svg>
<svg style="left:2650px;top:1736px" width="35" height="34" viewBox="0 0 35 34"><rect x="2" y="10" width="28" height="21" rx="5" fill="none" stroke="#1b1b1b" stroke-width="2.5"/><path d="M5 29L9 14H27V28H5Z" fill="#1b1b1b"/><rect x="30" y="17" width="4" height="7" rx="1" fill="#1b1b1b"/><path d="M9 0L4 12H9L6 21L14 9H9Z" fill="#1b1b1b"/></svg>
<div class="r n" style="left:2840px;top:1736px;font-size:23.5px;color:#1b1b1b">14:27</div>
<div class="r n" style="left:2840px;top:1768px;font-size:23.5px;color:#1b1b1b">2025-09-18</div>
</body></html>
